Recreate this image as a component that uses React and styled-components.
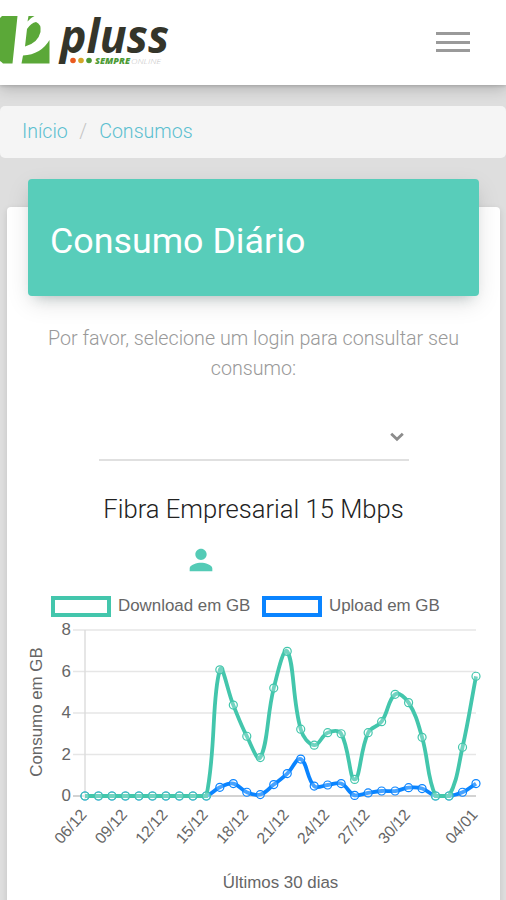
import React from "react";
import styled, { createGlobalStyle } from "styled-components";

// icons
import { MdPerson } from "react-icons/md";

const GREEN = "#43c6ac";
const BLUE = "#0a84ff";

const download = [
  0, 0, 0, 0, 0, 0, 0, 0, 0, 0, 6.08, 4.38, 2.88, 1.85, 5.2, 6.97, 3.22, 2.45,
  3.05, 3.0, 0.8, 3.05, 3.58, 4.9, 4.5, 2.83, 0, 0, 2.35, 5.77,
];

const upload = [
  0, 0, 0, 0, 0, 0, 0, 0, 0, 0, 0.42, 0.6, 0.18, 0.07, 0.55, 1.08, 1.78, 0.48,
  0.53, 0.6, 0.03, 0.15, 0.24, 0.24, 0.4, 0.36, 0, 0, 0.18, 0.6,
];

const labels = [
  [0, "06/12"],
  [3, "09/12"],
  [6, "12/12"],
  [9, "15/12"],
  [12, "18/12"],
  [15, "21/12"],
  [18, "24/12"],
  [21, "27/12"],
  [24, "30/12"],
  [29, "04/01"],
];

// plot area inside the chart svg
const area = { left: 61, right: 452, top: 8, bottom: 174 };

const px = (i) => area.left + (i * (area.right - area.left)) / 29;
const py = (v) => area.bottom - (v * (area.bottom - area.top)) / 8;
const clampY = (y) => Math.max(area.top, Math.min(area.bottom, y));

// bezier spline with tension 0.4, handles kept inside the plot area
const linePath = (data) => {
  const pts = data.map((v, i) => ({ x: px(i), y: py(v) }));
  const handles = pts.map((p, i) => {
    const prev = pts[i - 1] || p;
    const next = pts[i + 1] || p;
    const d01 = Math.hypot(p.x - prev.x, p.y - prev.y);
    const d12 = Math.hypot(next.x - p.x, next.y - p.y);
    const fa = (0.4 * d01) / (d01 + d12);
    const fb = (0.4 * d12) / (d01 + d12);
    const dx = next.x - prev.x;
    const dy = next.y - prev.y;
    return {
      inX: p.x - fa * dx,
      inY: clampY(p.y - fa * dy),
      outX: p.x + fb * dx,
      outY: clampY(p.y + fb * dy),
    };
  });
  return pts
    .map((p, i) => {
      if (i === 0) return `M${p.x} ${p.y}`;
      const a = handles[i - 1];
      const b = handles[i];
      return `C${a.outX} ${a.outY} ${b.inX} ${b.inY} ${p.x} ${p.y}`;
    })
    .join(" ");
};

const Series = ({ data, color }) => (
  <g fill="none" stroke={color}>
    <path d={linePath(data)} strokeWidth="3.8" />
    {data.map((v, i) => (
      <circle
        key={i}
        cx={px(i)}
        cy={py(v)}
        r="4"
        strokeWidth="1.2"
        fill="rgba(255, 255, 255, 0.25)"
      />
    ))}
  </g>
);

const Chart = () => (
  <ChartSvg viewBox="0 0 464 276">
    {[0, 2, 4, 6, 8].map((v) => (
      <g key={v}>
        <line
          x1={area.left - 12}
          x2={area.right}
          y1={py(v)}
          y2={py(v)}
          stroke={v === 0 ? "#c4c4c4" : "#e6e6e6"}
          strokeWidth="1.4"
        />
        <text x={area.left - 14} y={py(v) + 5} textAnchor="end">
          {v}
        </text>
      </g>
    ))}
    <line
      x1={area.left}
      x2={area.left}
      y1={area.top}
      y2={area.bottom + 4}
      stroke="#dcdcdc"
      strokeWidth="1.4"
    />
    <Series data={upload} color={BLUE} />
    <Series data={download} color={GREEN} />
    {labels.map(([i, text]) => (
      <DateLabel
        key={text}
        textAnchor="end"
        transform={`translate(${px(i) + 2.5} ${area.bottom + 19}) rotate(-49)`}
      >
        {text}
      </DateLabel>
    ))}
    <text transform="translate(18 90) rotate(-90)" textAnchor="middle">
      Consumo em GB
    </text>
    <text x="256.500" y="266" textAnchor="middle">
      Últimos 30 dias
    </text>
  </ChartSvg>
);

const Logo = () => (
  <LogoSvg viewBox="0 0 172 56">
    <path d="M2 4H17.500L12.500 51.500H3Q2 50 0 49V6Z" fill="#5ba838" />
    <path
      d="M28.500 4H34.500Q30 6 27.500 9.500ZM36 10Q41.500 12 40.500 20Q38 31 25 34.500L27 17Q31 11 36 10ZM49.500 28V51.500H21.500L23 43.500Q41 42.500 49.500 28Z"
      fill="#5ba838"
    />
    <LogoName x="60" y="41" textLength="109" lengthAdjust="spacingAndGlyphs">
      pluss
    </LogoName>
    <circle cx="73" cy="48.500" r="2.800" fill="#ea5b1f" />
    <circle cx="81" cy="48.500" r="2.800" fill="#d3a629" />
    <circle cx="89" cy="48.500" r="2.800" fill="#4c9a35" />
    <LogoTag
      x="95"
      y="51.500"
      $bold
      textLength="35"
      lengthAdjust="spacingAndGlyphs"
    >
      SEMPRE
    </LogoTag>
    <LogoTag x="131" y="51.500" textLength="30" lengthAdjust="spacingAndGlyphs">
      ONLINE
    </LogoTag>
  </LogoSvg>
);

const App = () => {
  return (
    <Page>
      <GlobalStyle />
      <Navbar>
        <Logo />
        <Toggler aria-label="Menu">
          <span />
          <span />
          <span />
        </Toggler>
      </Navbar>

      <Breadcrumb>
        <a>Início</a>
        <Divider>/</Divider>
        <a>Consumos</a>
      </Breadcrumb>

      <Card>
        <CardHeader>Consumo Diário</CardHeader>
        <Hint>Por favor, selecione um login para consultar seu consumo:</Hint>
        <Select>
          <svg width="14" height="10" viewBox="0 0 14 10">
            <path d="M1.200 1.700L7 7.300L12.800 1.700" />
          </svg>
        </Select>
        <Plan>Fibra Empresarial 15 Mbps</Plan>
        <UserRow>
          <MdPerson size={34} />
        </UserRow>
        <Legend>
          <LegendBox $color={GREEN} />
          <LegendText $width={132}>Download em GB</LegendText>
          <LegendBox $color={BLUE} />
          <LegendText $width={110}>Upload em GB</LegendText>
        </Legend>
        <Chart />
      </Card>
    </Page>
  );
};

const GlobalStyle = createGlobalStyle`
  * {
    box-sizing: border-box;
  }

  body {
    margin: 0;
    background: #dedede;
    font-family: Roboto, "Liberation Sans", sans-serif;
    font-weight: 300;
  }
`;

const Page = styled.div`
  display: flex;
  flex-direction: column;
  height: 900px;
  overflow: hidden;
`;

const Navbar = styled.nav`
  display: flex;
  align-items: flex-start;
  justify-content: space-between;
  flex: none;
  height: 85px;
  padding: 12px 36px 0 0;
  background: #fff;
  box-shadow: 0 3px 14px rgba(0, 0, 0, 0.22), 0 1px 3px rgba(0, 0, 0, 0.14);
`;

const LogoSvg = styled.svg`
  width: 172px;
  height: 56px;
  overflow: visible;
`;

const LogoName = styled.text`
  fill: #34352a;
  font-family: "Open Sans", "Noto Sans", sans-serif;
  font-size: 47px;
  font-style: italic;
  font-weight: 700;
`;

const LogoTag = styled.text`
  fill: ${(props) => (props.$bold ? "#4c9a35" : "#c4c4c4")};
  font-family: "Open Sans", "Noto Sans", sans-serif;
  font-size: 8px;
  font-style: italic;
  font-weight: ${(props) => (props.$bold ? 800 : 300)};
`;

const Toggler = styled.button`
  display: flex;
  flex-direction: column;
  gap: 5.5px;
  margin-top: 20px;
  padding: 0;
  border: none;
  background: none;

  span {
    width: 34px;
    height: 3px;
    background: #9a9a9a;
  }
`;

const Breadcrumb = styled.div`
  display: flex;
  align-items: center;
  flex: none;
  height: 52px;
  margin-top: 21px;
  padding: 0 22px 1px;
  border-radius: 5px;
  background: #f5f5f5;
  color: #5bbfd0;
  font-size: 19.6px;
`;

const Divider = styled.span`
  margin: 0 12px 0 11.5px;
  color: #c4c4c4;
`;

const Card = styled.main`
  display: flex;
  flex-direction: column;
  flex: none;
  height: 720px;
  margin: 49px 6px 0 7px;
  border-radius: 4px 4px 0 0;
  background: #fff;
  box-shadow: 0 2px 6px rgba(0, 0, 0, 0.12);
`;

const CardHeader = styled.h4`
  display: flex;
  align-items: center;
  flex: none;
  height: 117px;
  margin: -28px 21px 0;
  padding: 7px 22px 0;
  border-radius: 4px;
  background: #58cdba;
  box-shadow: 0 8px 24px -2px rgba(0, 0, 0, 0.13),
    0 8px 12px -8px rgba(40, 90, 90, 0.3);
  color: #fff;
  font-size: 35.8px;
  font-weight: 400;
`;

const Hint = styled.p`
  width: 420px;
  margin: 28px auto 0;
  color: #999;
  font-size: 19.7px;
  line-height: 30px;
  text-align: center;
`;

const Select = styled.div`
  display: flex;
  justify-content: flex-end;
  align-self: center;
  width: 310px;
  height: 29px;
  margin-top: 48px;
  padding: 0 5px;
  border-bottom: 2px solid #e0e0e0;

  svg {
    fill: none;
    stroke: #8c8c8c;
    stroke-width: 2.8;
  }
`;

const Plan = styled.h4`
  margin: 31px 0 0;
  color: #222;
  font-size: 25.6px;
  font-weight: 300;
  line-height: 34px;
  text-align: center;
`;

const UserRow = styled.div`
  display: flex;
  height: 34px;
  margin: 17px 0 0 177px;
  color: #54cbb6;
`;

const Legend = styled.div`
  display: flex;
  align-items: center;
  height: 22px;
  margin: 18px 0 0 44px;
  color: #666;
  font-family: "Liberation Sans", Arial, sans-serif;
  font-size: 16.9px;
  font-weight: 400;
`;

const LegendBox = styled.span`
  width: 60px;
  height: 21px;
  border: 4px solid ${(props) => props.$color};
`;

const LegendText = styled.span`
  width: ${(props) => props.$width}px;
  margin: 0 12px 0 7px;
  white-space: nowrap;
`;

const ChartSvg = styled.svg`
  flex: none;
  width: 464px;
  height: 276px;
  margin: 5px 0 0 17px;
  overflow: visible;

  text {
    fill: #666;
    font-family: "Liberation Sans", Arial, sans-serif;
    font-size: 16.9px;
    font-weight: 400;
  }
`;

const DateLabel = styled.text`
  && {
    font-size: 15.8px;
  }
`;

export default App;
